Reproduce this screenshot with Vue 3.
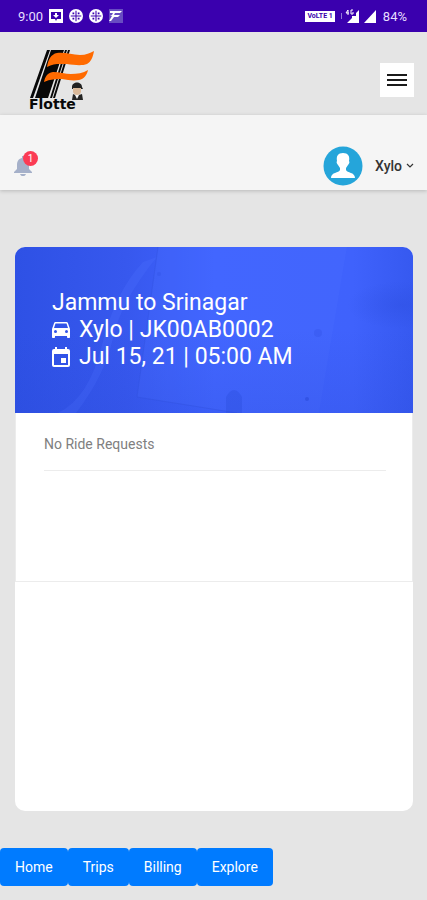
<script setup>
import { ref } from 'vue'

const notifications = ref(1)

const trip = {
  route: 'Jammu to Srinagar',
  vehicle: 'Xylo | JK00AB0002',
  departure: 'Jul 15, 21 | 05:00 AM'
}

const links = [
  { label: 'Home', href: '#home' },
  { label: 'Trips', href: '#trips' },
  { label: 'Billing', href: '#billing' },
  { label: 'Explore', href: '#explore' }
]
</script>

<template>
  <div class="page">
    <div class="status">
      <div class="status__group">
        <span>9:00</span>
        <svg width="14" height="14" viewBox="1 1 14 14">
          <path fill="#fff" d="M1 1h14v14H1z" />
          <path fill="#3a00ae" d="M3 4h10v7H9l-1 2-1-2H3z" />
          <path fill="#fff" d="M7 5h2v2h2L8 10 5 7h2z" />
        </svg>
        <svg v-for="n in 2" :key="n" width="14" height="14" viewBox="0 0 16 16">
          <circle cx="8" cy="8" r="8" fill="#fff" />
          <path stroke="#3a00ae" stroke-width="1.2" d="M8 2v12M2 8h12" />
          <path fill="#3a00ae" d="M4 4h2v2H4zM10 4h2v2h-2zM4 10h2v2H4zM10 10h2v2h-2z" />
        </svg>
        <svg width="14" height="14" viewBox="0 0 14 14">
          <path fill="#684dc2" d="M0 0h14v14H0z" />
          <path fill="#fff" d="M1 2h12l-2 2H6L5 6h6l-2 2H5l-3 4H0l3-5H1l2-1 1-2H1z" />
        </svg>
      </div>
      <div class="status__group status__group--right">
        <span class="status__volte">VoLTE 1</span>
        <svg width="36" height="16" viewBox="0 0 36 16">
          <path fill="#9279d8" d="M0 5h1v6H0z" />
          <path fill="#fff" d="M18 2v13H6l5-5V8h4V5zM35 2v13H23z" />
          <path stroke="#fff" fill="none" d="M7 2L5 5h3M7 2v5M12 2h-2v4h2V4" />
        </svg>
        <span>84%</span>
      </div>
    </div>

    <header class="brand">
      <a class="brand__logo" href="#home" aria-label="Flotte">
        <svg width="68" height="62" viewBox="0 0 68 62">
          <path fill="#080808" d="M18 1h3L4 49H1zM22 1h13L19 49H6z" />
          <path fill="#080808" d="M36 1h2L23 49h-2zM39 1h2L26 49h-2z" />
          <path fill="#ff6a00" d="M28 4c8-1 15 2 23 2 6 0 10-2 14-4-1 6-3 11-7 13-5 2-13 1-20 0-7 0-13-1-20 3 1-7 4-13 10-14z" />
          <path fill="#ff6a00" d="M24 23c7 0 12 2 18 2 6 0 12-1 17-4-1 5-4 9-9 10-6 1-11 0-17-1-6 0-12 0-18 3 1-5 3-9 9-10z" />
          <path fill="#222" d="M43 38c0-6 10-6 10 0l1 2H43z" />
          <path fill="#d9b899" d="M44 39h8v4c-1 4-7 4-8 0z" />
          <path fill="#f7f7f7" d="M45 46h7l1 5h-9z" />
          <path fill="#242424" d="M44 45l2 1 2 4 2-4 3-1 1 6H43z" />
          <text class="brand__name" x="0" y="60">Flotte</text>
        </svg>
      </a>
      <button class="brand__menu" type="button" aria-label="Menu">
        <svg width="20" height="16" viewBox="0 0 20 16">
          <path stroke="#1b1b1b" stroke-width="2" d="M0 3h20M0 8h20M0 13h20" />
        </svg>
      </button>
    </header>

    <div class="account">
      <button class="account__bell" type="button" aria-label="Notifications">
        <svg width="18" height="20" viewBox="0 0 18 20">
          <path fill="#a5b0c9" d="M8 0h2v2c4 1 5 4 5 7v4l3 3v1H0v-1l3-3V9c0-3 1-6 5-7zM6 18h6c-1 3-5 3-6 0z" />
        </svg>
        <span class="account__badge">{{ notifications }}</span>
      </button>
      <button class="account__user" type="button">
        <svg width="40" height="40" viewBox="0 0 40 40">
          <circle cx="20" cy="20" r="19.5" fill="#25a5da" />
          <path fill="#fff" d="M20 7c5 0 7 3 6 8 1 1 0 3-1 4l-2 3v2c1 3 9 2 9 8H8c0-6 8-5 9-8v-2l-2-3c-1-1-2-3-1-4-1-5 1-8 6-8z" />
        </svg>
        <span>Xylo</span>
        <svg class="account__arrow" width="8" height="6" viewBox="0 0 8 6">
          <path fill="none" stroke="#333" stroke-width="1.2" d="M1 1l3 3 3-3" />
        </svg>
      </button>
    </div>

    <main class="card">
      <section class="trip">
        <svg class="trip__backdrop" viewBox="0 0 398 166" preserveAspectRatio="none" aria-hidden="true">
          <defs>
            <linearGradient id="shade">
              <stop offset="0" stop-color="#2e51e5" />
              <stop offset="0.28" stop-color="#3758ee" />
              <stop offset="0.5" stop-color="#3f63ff" />
              <stop offset="0.85" stop-color="#3f62fc" />
              <stop offset="1" stop-color="#3659f0" />
            </linearGradient>
            <linearGradient id="fade" x2="0" y2="1">
              <stop offset="0.5" stop-color="#2948d2" stop-opacity="0" />
              <stop offset="1" stop-color="#2948d2" stop-opacity="0.2" />
            </linearGradient>
            <radialGradient id="shadow">
              <stop offset="0" stop-color="#2c4edf" stop-opacity="0.4" />
              <stop offset="1" stop-color="#2c4edf" stop-opacity="0" />
            </radialGradient>
          </defs>
          <path fill="url(#shade)" d="M0 0h398v166H0z" />
          <path fill="#4a6cff" opacity="0.3" d="M143 0l-21 150 100 16h82L332 0z" />
          <path fill="#4568fb" opacity="0.4" d="M128 15Q100 45 87 98T43 166h18Q90 128 98 91T142 10z" />
          <ellipse cx="386" cy="58" rx="54" ry="24" fill="url(#shadow)" />
          <path fill="none" stroke="#3152df" opacity="0.4" d="M143 0l-21 150 100 16" />
          <path fill="#2e50e2" opacity="0.4" d="M211 166v-16q8-14 16 0v16z" />
          <circle cx="303" cy="86" r="4" fill="#3456e9" opacity="0.4" />
          <circle cx="144" cy="27" r="2" fill="#3456e9" opacity="0.5" />
          <circle cx="292" cy="152" r="2" fill="#3456e9" />
          <path fill="url(#fade)" d="M0 0h398v166H0z" />
        </svg>
        <div class="trip__info">
          <div class="trip__line">{{ trip.route }}</div>
          <div class="trip__line">
            <svg width="18" height="18" viewBox="3 3 18 18">
              <path fill="#fff" d="M18.9 5c-.2-.6-.8-1-1.4-1h-11c-.7 0-1.2.4-1.4 1L3 11v8c0 .6.5 1 1 1h1c.6 0 1-.4 1-1v-1h12v1c0 .6.5 1 1 1h1c.6 0 1-.4 1-1v-8zM6.5 15a1.5 1.5 0 1 1 0-3 1.5 1.5 0 0 1 0 3zm11 0a1.5 1.5 0 1 1 0-3 1.5 1.5 0 0 1 0 3zM5 10l1.5-4.5h11L19 10z" />
            </svg>
            <span>{{ trip.vehicle }}</span>
          </div>
          <div class="trip__line">
            <svg width="18" height="20" viewBox="3 1 18 20">
              <path fill="#fff" d="M17 12h-5v5h5zM16 1v2H8V1H6v2H5a2 2 0 0 0-2 2v14c0 1.1.9 2 2 2h14a2 2 0 0 0 2-2V5a2 2 0 0 0-2-2h-1V1zm3 18H5V8h14z" />
            </svg>
            <span>{{ trip.departure }}</span>
          </div>
        </div>
      </section>
      <section class="requests">
        <p class="requests__empty">No Ride Requests</p>
      </section>
    </main>

    <nav class="links">
      <a v-for="link in links" :key="link.label" class="links__item" :href="link.href">{{ link.label }}</a>
    </nav>
  </div>
</template>

<style>
body {
  margin: 0;
  background: #e5e5e5;
}
</style>

<style scoped>
.page {
  min-height: 100vh;
  background: #e5e5e5;
  color: #333;
  font-family: Roboto, sans-serif;
  font-size: 14px;
}

.page * {
  box-sizing: border-box;
}

svg {
  display: block;
  flex-shrink: 0;
}

button {
  padding: 0;
  border: 0;
  background: none;
  color: inherit;
  font: inherit;
  cursor: pointer;
}

.status {
  display: flex;
  align-items: center;
  justify-content: space-between;
  height: 32px;
  padding: 0 20px 0 18px;
  background: #3a00ae;
  color: #e7dfff;
  font-size: 13px;
}

.status__group {
  display: flex;
  align-items: center;
  gap: 6px;
}

.status__volte {
  padding: 0 2px;
  background: #fff;
  color: #3a00ae;
  font-size: 7px;
  font-weight: 700;
  line-height: 11px;
}

.brand {
  display: flex;
  align-items: center;
  justify-content: space-between;
  height: 83px;
  padding: 12px 13px 0 29px;
}

.brand__name {
  fill: #080808;
  font-family: "DejaVu Sans", sans-serif;
  font-size: 14px;
  font-weight: 700;
}

.brand__menu {
  display: flex;
  align-items: center;
  justify-content: center;
  width: 34px;
  height: 34px;
  background: #fff;
}

.account {
  display: flex;
  align-items: center;
  justify-content: space-between;
  height: 75px;
  padding: 26px 13px 0 14px;
  background: #f5f5f5;
  box-shadow: 0 1px 4px rgba(0, 0, 0, 0.2);
}

.account__bell {
  position: relative;
}

.account__badge {
  position: absolute;
  top: -5px;
  left: 9px;
  width: 15px;
  height: 15px;
  border-radius: 50%;
  background: #fb3b54;
  color: #fff;
  font-size: 10px;
  line-height: 15px;
  text-align: center;
}

.account__user {
  display: flex;
  align-items: center;
  font-weight: 500;
}

.account__user span {
  margin: 0 4px 0 12px;
}

.card {
  min-height: 564px;
  margin: 57px 14px 0 15px;
  border-radius: 10px;
  background: #fff;
  overflow: hidden;
}

.trip {
  display: grid;
  min-height: 166px;
}

.trip__backdrop {
  grid-area: 1 / 1;
  width: 100%;
  height: 166px;
}

.trip__info {
  z-index: 1;
  grid-area: 1 / 1;
  padding: 42px 37px 0;
  color: #fff;
  font-size: 23px;
  line-height: 27px;
}

.trip__line {
  display: flex;
  align-items: center;
  gap: 9px;
}

.requests {
  min-height: 169px;
  padding: 21px 26px 0 28px;
  border: 1px solid #ececec;
  border-top: 0;
}

.requests__empty {
  margin: 0;
  padding-bottom: 15px;
  border-bottom: 1px solid #ececec;
  color: #808080;
  line-height: 21px;
}

.links {
  display: flex;
  margin-top: 37px;
  padding-bottom: 14px;
}

.links__item {
  padding: 0 15px;
  border-radius: 4px;
  background: #007bff;
  color: #fff;
  line-height: 38px;
  text-decoration: none;
}
</style>
